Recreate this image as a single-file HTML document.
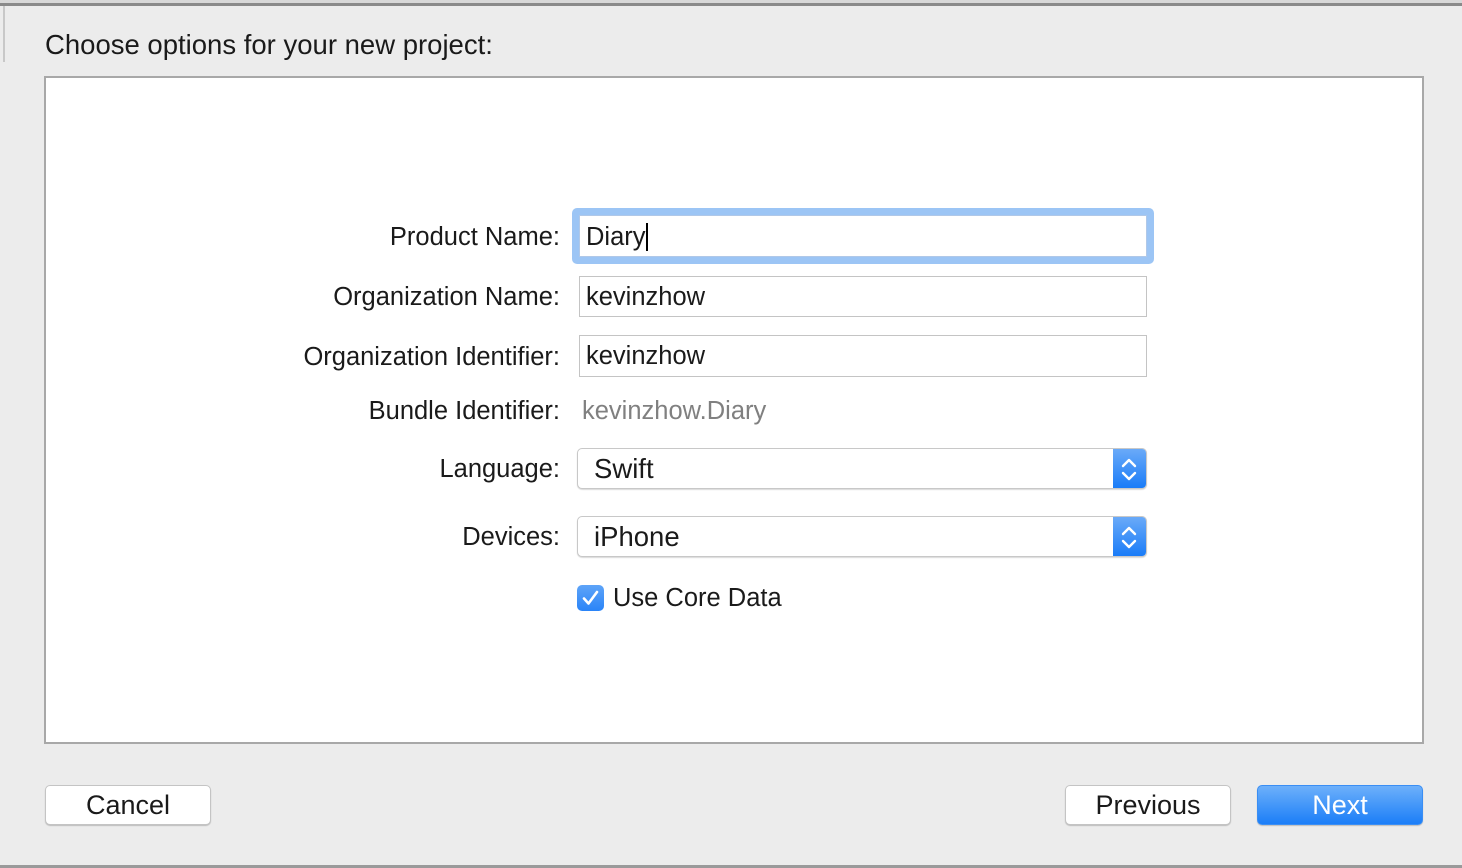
<!DOCTYPE html>
<html><head><meta charset="utf-8"><style>
*{margin:0;padding:0;box-sizing:border-box}
body{width:1462px;height:868px;background:#ececec;position:relative;overflow:hidden;font-family:"Liberation Sans",sans-serif;color:#1a1a1a}
.a{position:absolute}
.lbl{position:absolute;right:902px;font-size:25.5px;line-height:28px;white-space:nowrap}
.fld{position:absolute;left:579px;width:568px;background:#fff;border:1px solid #c4c4c4;font-size:25.5px;padding-left:6px;line-height:40px}
.pop{position:absolute;left:577px;width:570px;height:41px;background:#fff;border:1px solid #c8c8c8;border-radius:5px;box-shadow:0 1px 1px rgba(0,0,0,.15);font-size:27.5px;line-height:39px;padding-left:16px;overflow:hidden}
.pop .b{position:absolute;right:0;top:0;width:33px;height:100%;background:linear-gradient(#6aaaf8,#1a7cf8)}
.btn{position:absolute;top:785px;width:166px;height:40px;background:#fff;border:1px solid #c4c4c4;border-radius:5px;box-shadow:0 1px 1px rgba(0,0,0,.2);font-size:27px;text-align:center;line-height:38px}
</style></head><body>
<div class="a" style="left:0;top:0;width:1462px;height:3px;background:#d8d8d8"></div>
<div class="a" style="left:0;top:3px;width:1462px;height:3px;background:#8a8a8a"></div>
<div class="a" style="left:3px;top:6px;width:2px;height:56px;background:#c8c8c8"></div>
<div class="a" style="left:45px;top:30px;font-size:27.5px;line-height:30px">Choose options for your new project:</div>
<div class="a" style="left:44px;top:76px;width:1380px;height:668px;background:#fff;border:2px solid #a8a8a8"></div>
<div class="lbl" style="top:223px">Product Name:</div>
<div class="lbl" style="top:283px">Organization Name:</div>
<div class="lbl" style="top:343px">Organization Identifier:</div>
<div class="lbl" style="top:397px">Bundle Identifier:</div>
<div class="lbl" style="top:455px">Language:</div>
<div class="lbl" style="top:523px">Devices:</div>
<div class="a" style="left:572px;top:208px;width:582px;height:56px;border-radius:5px;background:#9cc5f5"></div>
<div class="fld" style="top:215px;height:42px;border-color:#b0c8e8;line-height:42px">Diary<span style="display:inline-block;width:2px;height:28px;background:#000;vertical-align:-6px"></span></div>
<div class="fld" style="top:276px;height:41px">kevinzhow</div>
<div class="fld" style="top:335px;height:42px">kevinzhow</div>
<div class="a" style="left:582px;top:397px;font-size:25.5px;line-height:28px;color:#808080">kevinzhow.Diary</div>
<div class="pop" style="top:448px">Swift<div class="b"><svg width="33" height="41" viewBox="0 0 33 41"><path d="M10 17l6-6 6 6M10 24l6 6 6-6" stroke="#fff" stroke-width="2.4" fill="none" stroke-linecap="round" stroke-linejoin="round"/></svg></div></div>
<div class="pop" style="top:516px">iPhone<div class="b"><svg width="33" height="41" viewBox="0 0 33 41"><path d="M10 17l6-6 6 6M10 24l6 6 6-6" stroke="#fff" stroke-width="2.4" fill="none" stroke-linecap="round" stroke-linejoin="round"/></svg></div></div>
<div class="a" style="left:577px;top:585px;width:27px;height:26px;border-radius:5px;background:linear-gradient(#5ea4f8,#2a84f8)"><svg width="27" height="26"><path d="M7 13.5l4.5 5L20 7" stroke="#fff" stroke-width="2.6" fill="none" stroke-linecap="round" stroke-linejoin="round"/></svg></div>
<div class="a" style="left:613px;top:584px;font-size:25.5px;line-height:28px">Use Core Data</div>
<div class="btn" style="left:45px">Cancel</div>
<div class="btn" style="left:1065px">Previous</div>
<div class="btn" style="left:1257px;background:linear-gradient(#6db0fa,#1b7ef8);border-color:#3a8ef4;color:#fff">Next</div>
<div class="a" style="left:0;top:865px;width:1462px;height:3px;background:#9a9a9a"></div>
</body></html>
